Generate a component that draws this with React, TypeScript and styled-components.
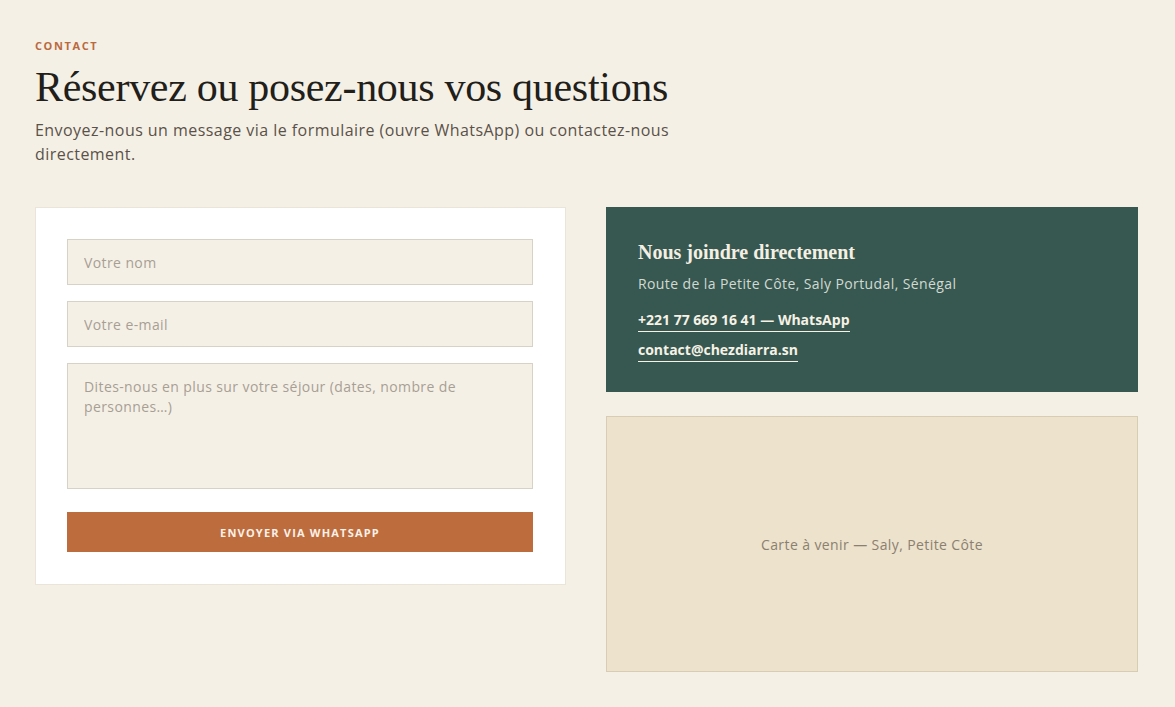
import React from "react";
import styled, { createGlobalStyle } from "styled-components";

const Global = createGlobalStyle`
  html, body { margin: 0; padding: 0; background: #f5f0e6; }
  body { font-family: "Open Sans", "Liberation Sans", sans-serif; color: #2a2520; }
  * { box-sizing: border-box; }
`;

const Section = styled.section`
  padding: 39px 37px 36px 35px;
`;

const Eyebrow = styled.div`
  font-size: 11px;
  font-weight: 700;
  letter-spacing: 1.6px;
  color: #b96a40;
  text-transform: uppercase;
  line-height: 14px;
`;

const Title = styled.h1`
  margin: 12px 0 0;
  font-family: "Liberation Serif", "DejaVu Serif", serif;
  font-weight: 400;
  font-size: 42px;
  line-height: 44px;
  color: #221e1a;
  letter-spacing: -0.3px;
`;

const Lead = styled.p`
  margin: 9px 0 0;
  max-width: 670px;
  font-size: 16px;
  letter-spacing: 0.45px;
  line-height: 24px;
  color: #5a5249;
`;

const Grid = styled.div`
  margin-top: 41px;
  display: grid;
  grid-template-columns: 531px 532px;
  column-gap: 40px;
  align-items: start;
`;

const FormCard = styled.form`
  background: #ffffff;
  border: 1px solid #ebe5d9;
  padding: 31px 32px 32px 31px;
  display: flex;
  flex-direction: column;
  gap: 16px;
`;

const fieldCss = `
  width: 100%;
  background: #f5f0e6;
  border: 1px solid #d8d2c6;
  font-family: "Open Sans", "Liberation Sans", sans-serif;
  font-size: 14px;
  letter-spacing: 0.4px;
  color: #3a342e;
  padding: 0 16px;
  outline: none;
  &::placeholder { color: #a79f94; }
`;

const Input = styled.input`
  ${fieldCss}
  height: 46px;
`;

const TextArea = styled.textarea`
  ${fieldCss}
  height: 126px;
  padding: 13px 16px;
  line-height: 20px;
  resize: none;
  display: block;
`;

const SubmitButton = styled.button`
  margin-top: 7px;
  height: 40px;
  border: none;
  background: #bd6c3e;
  color: #fbf1e8;
  font-family: "Open Sans", "Liberation Sans", sans-serif;
  font-weight: 700;
  font-size: 11px;
  letter-spacing: 1.2px;
  text-transform: uppercase;
  cursor: pointer;
`;

const Side = styled.div`
  display: flex;
  flex-direction: column;
  gap: 24px;
`;

const InfoCard = styled.div`
  background: #365850;
  padding: 33px 32px 31px;
  display: flex;
  flex-direction: column;
  height: 185px;
`;

const InfoTitle = styled.h3`
  margin: 0;
  font-family: "Liberation Serif", "DejaVu Serif", serif;
  font-weight: 700;
  font-size: 20px;
  line-height: 24px;
  color: #f5efe3;
`;

const Address = styled.p`
  margin: 10px 0 0;
  font-size: 14px;
  letter-spacing: 0.4px;
  line-height: 20px;
  color: #d3d9d2;
`;

const InfoLink = styled.a<{ $first?: boolean }>`
  align-self: flex-start;
  margin-top: ${(p) => (p.$first ? "17px" : "9px")};
  font-size: 14px;
  font-weight: 700;
  line-height: 18px;
  padding-bottom: 2px;
  color: #f7f1e6;
  text-decoration: none;
  border-bottom: 1px solid #f7f1e6;
`;

const MapBox = styled.div`
  height: 256px;
  background: #ede2cc;
  border: 1px solid #d8ccb4;
  display: flex;
  align-items: center;
  justify-content: center;
  font-size: 14px;
  letter-spacing: 0.4px;
  color: #8b8070;
`;

export default function App() {
  return (
    <>
      <Global />
      <Section>
        <Eyebrow>Contact</Eyebrow>
        <Title>Réservez ou posez-nous vos questions</Title>
        <Lead>
          Envoyez-nous un message via le formulaire (ouvre WhatsApp) ou contactez-nous directement.
        </Lead>
        <Grid>
          <FormCard onSubmit={(e) => e.preventDefault()}>
            <Input placeholder="Votre nom" />
            <Input placeholder="Votre e-mail" />
            <TextArea placeholder="Dites-nous en plus sur votre séjour (dates, nombre de personnes…)" />
            <SubmitButton type="submit">Envoyer via WhatsApp</SubmitButton>
          </FormCard>
          <Side>
            <InfoCard>
              <InfoTitle>Nous joindre directement</InfoTitle>
              <Address>Route de la Petite Côte, Saly Portudal, Sénégal</Address>
              <InfoLink $first href="#">+221 77 669 16 41 — WhatsApp</InfoLink>
              <InfoLink href="#">contact@chezdiarra.sn</InfoLink>
            </InfoCard>
            <MapBox>Carte à venir — Saly, Petite Côte</MapBox>
          </Side>
        </Grid>
      </Section>
    </>
  );
}
